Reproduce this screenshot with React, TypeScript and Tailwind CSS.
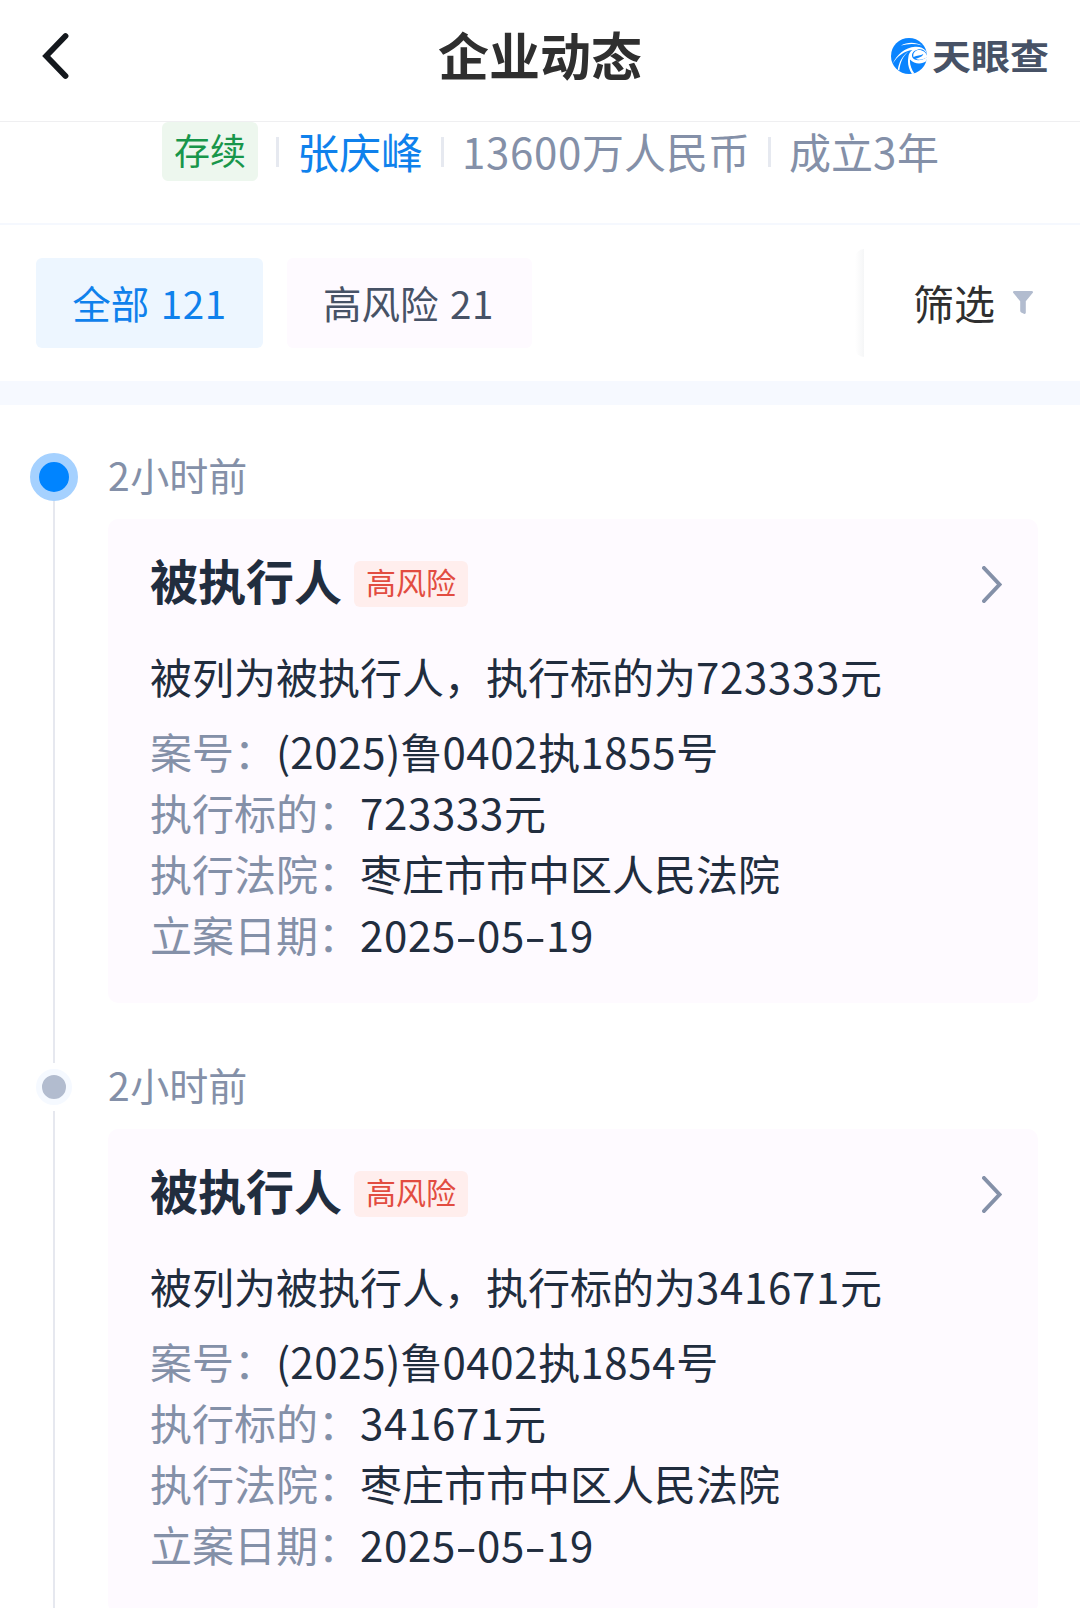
import React from 'react';

type Dynamic = {
  time: string;
  title: string;
  level: string;
  summary: string;
  fields: { label: string; value: string }[];
};

const DYNAMICS: Dynamic[] = [
  {
    time: '2小时前',
    title: '被执行人',
    level: '高风险',
    summary: '被列为被执行人，执行标的为723333元',
    fields: [
      { label: '案号', value: '(2025)鲁0402执1855号' },
      { label: '执行标的', value: '723333元' },
      { label: '执行法院', value: '枣庄市市中区人民法院' },
      { label: '立案日期', value: '2025-05-19' },
    ],
  },
  {
    time: '2小时前',
    title: '被执行人',
    level: '高风险',
    summary: '被列为被执行人，执行标的为341671元',
    fields: [
      { label: '案号', value: '(2025)鲁0402执1854号' },
      { label: '执行标的', value: '341671元' },
      { label: '执行法院', value: '枣庄市市中区人民法院' },
      { label: '立案日期', value: '2025-05-19' },
    ],
  },
];

// digits are set a little wider than the font's own, dashes are stretched
const Mixed = ({ text }: { text: string }) => (
  <>
    {text.split(/(\d+|-)/).filter(Boolean).map((part, i) => {
      if (part === '-') {
        return <span key={i} className="inline-block w-[21px] text-center"><span className="inline-block scale-x-150">-</span></span>;
      }
      return <span key={i} className={/\d/.test(part) ? 'tracking-[0.016em]' : ''}>{part}</span>;
    })}
  </>
);

const Logo = () => (
  <div className="flex items-center">
    <svg className="w-[36px] h-[36px]" viewBox="0 0 36 36">
      <circle cx="18" cy="18" r="18" fill="#0a84ff" />
      <path d="M10 7.500C16 4 24 3.600 31 7.500C24 5.400 17 5.600 10 7.500Z" fill="#fff" />
      <path d="M1.500 26C6 16.500 14 9.500 24 8.800C29 8.500 32.500 10 35 13L36 16.500C34.500 12.500 31 10.800 27 11.500C22 12.500 20 16.500 21.500 19.500C24 23.500 31 23 36.500 18.500L35.500 23C31 26.500 23.500 26.500 19 21.500C18.500 26.500 20.500 31.500 23.500 35.500L21 36C17.500 31 16.300 25 17.300 19.500C17.600 16 19 13.600 21.500 12C13 13 6.500 18 1.500 26Z" fill="#fff" />
      <path d="M22.500 19C21.500 15.500 24 12 28 12C32.500 12 35.500 15 36.500 19C33 21.500 28 22.500 24.500 20.800C28 20 31.500 18.500 32.300 16C29.500 17.800 26 17.300 22.500 19Z" fill="#fff" />
      <path d="M17.500 13.500C12 18 9.300 24 8.300 32.500L6.800 31.600C8 24 11.500 17.500 17.500 13.500Z" fill="#fff" />
    </svg>
    <span className="ml-[5px] text-[39px] leading-[36px] font-bold text-[#475266] -mt-[3px] scale-y-90">天眼查</span>
  </div>
);

const Divider = () => <i className="block w-[3px] h-[30px] bg-[#e6e9f0]" />;

const Header = () => (
  <header className="h-[122px] border-b border-[#efeff1] pb-[9px] flex items-center justify-between pl-[42px] pr-[31px]">
    <div className="w-[147px]">
      <svg className="w-[28px] h-[48px]" viewBox="0 0 28 48" fill="none" stroke="#14181d" strokeWidth="5.800" strokeLinecap="round" strokeLinejoin="miter">
        <path d="M23.500 4L4.200 24L23.500 44" />
      </svg>
    </div>
    <h1 className="text-[51px] leading-[60px] font-bold text-[#2f2f2f] -mt-[5px]">企业动态</h1>
    <Logo />
  </header>
);

const CompanyInfo = () => (
  <div className="h-[103px] border-b-2 border-[#f5f8fe] pl-[162px] flex items-start text-[42px] leading-[54px] text-[#8490a8]">
    <div className="w-[96px] h-[59px] rounded-[6px] bg-[#edf7ee] text-[#18964a] text-[36px] leading-[55px] text-center">存续</div>
    <div className="h-[59px] flex items-center whitespace-nowrap ml-[18px]">
      <Divider />
      <span className="-mt-[2px] ml-[18px] mr-[18px] text-[#0f81ec]">张庆峰</span>
      <Divider />
      <span className="-mt-[2px] ml-[18px] mr-[18px]"><Mixed text="13600万人民币" /></span>
      <Divider />
      <span className="-mt-[2px] ml-[18px]"><Mixed text="成立3年" /></span>
    </div>
  </div>
);

const FilterBar = () => (
  <div className="h-[156px] flex items-center justify-between pl-[36px]">
    <div className="flex gap-[24px] text-[38.500px] leading-[84px] whitespace-nowrap">
      <button className="w-[227px] h-[90px] pb-[3px] rounded-[6px] bg-[#edf6ff] text-[#0f81ec] [word-spacing:3px]">全部 <Mixed text="121" /></button>
      <button className="w-[245px] h-[90px] pb-[3px] pr-[2px] rounded-[6px] bg-[#fefaff] text-[#475266] [word-spacing:3px]">高风险 <Mixed text="21" /></button>
    </div>
    <div className="flex items-center">
      <i className="block w-[9px] h-[108px] rounded-l-full bg-linear-to-r from-white to-[#f5f6f7]" />
      <div className="w-[216px] flex items-center pl-[49px]">
        <span className="text-[41px] leading-[50px] text-[#2f2f2f] -mt-[3px]">筛选</span>
        <svg className="w-[20px] h-[23px] ml-[18px] -mt-[2px]" viewBox="0 0 20 23" fill="#b2bccf">
          <path d="M1.200 0H18.800C20 0 20.400 1.200 19.600 2.100L12.800 10.200V21.500C12.800 22.700 11.900 23.200 10.900 22.700L8.200 21.400C7.500 21 7.200 20.500 7.200 19.700V10.200L0.400 2.100C-0.400 1.200 0 0 1.200 0Z" />
        </svg>
      </div>
    </div>
  </div>
);

const DynamicCard = ({ item }: { item: Dynamic }) => (
  <div className="h-[484px] rounded-[10px] bg-[#fefaff] pt-[31px] pl-[42px] pr-[36px] text-[42px] leading-[61px] text-[#212d3e] whitespace-nowrap">
    <div className="h-[68px] flex items-center">
      <h2 className="text-[48px] leading-[56px] font-bold mb-[10px]">{item.title}</h2>
      <span className="ml-[12px] w-[114px] h-[46px] rounded-[6px] bg-[#ffeeed] text-[#e24c40] text-[30px] leading-[41px] text-center">{item.level}</span>
      <svg className="ml-auto w-[20px] h-[37px]" viewBox="0 0 20 37" fill="none" stroke="#8490a8" strokeWidth="4" strokeLinecap="round">
        <path d="M2 2L17.500 18.500L2 35" />
      </svg>
    </div>
    <p className="mt-[27px] mb-[14px]"><Mixed text={item.summary} /></p>
    {item.fields.map(field => (
      <div className="flex" key={field.label}>
        <span className="text-[#8490a8]">{field.label}：</span>
        <span><Mixed text={field.value} /></span>
      </div>
    ))}
  </div>
);

const TimelineItem = ({ item, active }: { item: Dynamic; active: boolean }) => (
  <div className="flex h-[610px]">
    <div className="w-[108px] flex flex-col items-center">
      <div className="h-[48px] flex items-center">
        {active ? (
          <i className="block w-[48px] h-[48px] rounded-full bg-[#0084ff] border-9 border-[#a5d1ff]" />
        ) : (
          <i className="block w-[36px] h-[36px] rounded-full bg-[#b2bccf] border-6 border-[#f5f9ff]" />
        )}
      </div>
      <i className="block w-[2px] flex-1 bg-[#e6e8ef]" />
    </div>
    <div className="w-[930px]">
      <div className="h-[66px] text-[39px] leading-[42px] text-[#8490a8]"><Mixed text={item.time} /></div>
      <DynamicCard item={item} />
    </div>
  </div>
);

const App = () => {
  return (
    <div className="w-[1080px] h-[1608px] overflow-hidden bg-white font-['Noto_Sans_CJK_SC',sans-serif]">
      <Header />
      <CompanyInfo />
      <FilterBar />
      <div className="h-[24px] bg-[#f6f9ff]" />
      <div className="pt-[48px]">
        {DYNAMICS.map((item, i) => (
          <TimelineItem key={i} item={item} active={i === 0} />
        ))}
      </div>
    </div>
  );
};

export default App;
